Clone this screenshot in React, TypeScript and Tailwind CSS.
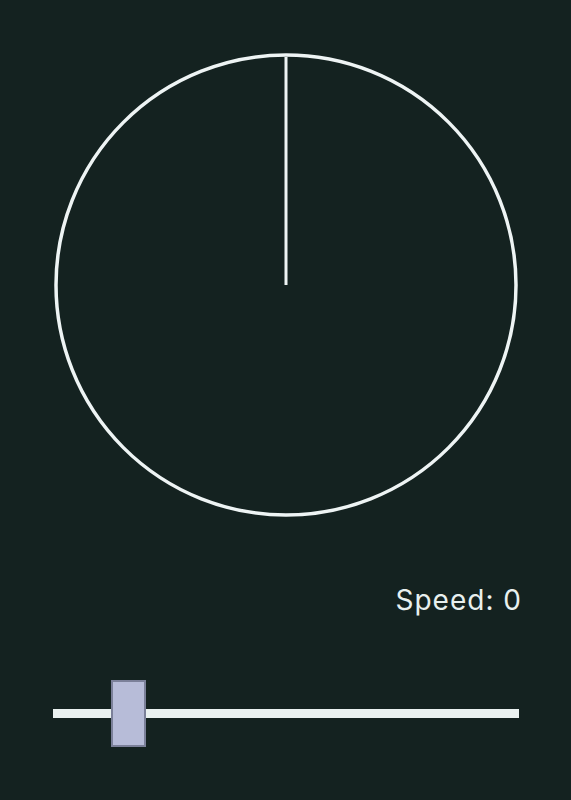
import { useState } from "react";

const App = () => {
  const [speed] = useState(0);
  const angle = 0;

  return (
    <div className="min-h-screen w-full bg-[#142220] font-['Inter',sans-serif]">
      <div className="flex flex-col pt-[52px] pl-[53px] w-[522px]">
        {/* dial */}
        <svg width="466" height="466" viewBox="0 0 466 466">
          <circle cx="233" cy="233" r="230" fill="none" stroke="#eef4f4" strokeWidth="3.5" />
          <line
            x1="233"
            y1="233"
            x2="233"
            y2="5"
            stroke="#eef4f4"
            strokeWidth="3"
            transform={`rotate(${angle} 233 233)`}
          />
        </svg>

        <div className="mt-[68px] flex justify-end">
          <span className="text-[28px] leading-none text-[#e8f0ef] tracking-[1px]">Speed: {speed}</span>
        </div>

        {/* slider */}
        <div className="relative mt-[66px] h-[67px] flex items-center">
          <div className="h-[9px] w-[466px] bg-[#eaf1f0]" />
          <div className="absolute left-[58px] top-0 h-[67px] w-[35px] bg-[#b7bcd8] border-2 border-[#7b8099]" />
        </div>
      </div>
    </div>
  );
};

export default App;
